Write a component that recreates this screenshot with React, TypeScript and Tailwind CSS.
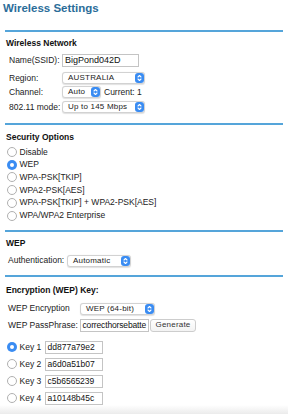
import React from "react";

// --- small form pieces ---
function Stepper() {
    return (
        <div className="w-[9px] h-full shrink-0 rounded-[3px] bg-[#3a8cf2] flex items-center justify-center">
            <svg width="5" height="8" viewBox="0 0 5 8" fill="none" stroke="white" strokeWidth="1.1" strokeLinecap="round" strokeLinejoin="round">
                <path d="M1 3 L2.5 1.5 L4 3" />
                <path d="M1 5 L2.5 6.5 L4 5" />
            </svg>
        </div>
    );
}

function Select({ value, className }: { value: string; className: string }) {
    return (
        <div className={`h-[12px] flex items-center border border-[#d2d2d2] rounded-[3px] bg-white shadow-[0_0.5px_1px_rgba(0,0,0,0.12)] ${className}`}>
            <div className="flex-1 pl-[5px] text-[8px] tracking-[0.2px] text-[#222] whitespace-nowrap overflow-hidden leading-none">{value}</div>
            <Stepper />
        </div>
    );
}

function TextBox({ value, className }: { value: string; className: string }) {
    return (
        <div className={`h-[13px] flex items-center border border-[#c4c4c4] bg-white px-[2px] text-[8.5px] text-[#111] whitespace-nowrap overflow-hidden leading-none ${className}`}>
            {value}
        </div>
    );
}

function Radio({ checked }: { checked?: boolean }) {
    if (checked) {
        return (
            <div className="w-[10px] h-[10px] shrink-0 rounded-full bg-[#3a8cf2] flex items-center justify-center">
                <div className="w-[3.5px] h-[3.5px] rounded-full bg-white" />
            </div>
        );
    }
    return <div className="w-[10px] h-[10px] shrink-0 rounded-full border border-[#b0b0b0] bg-white" />;
}

function Rule({ className }: { className: string }) {
    return <div className={`ml-[5px] w-[278px] h-[2px] bg-[#55a5da] ${className}`} />;
}

function Heading({ children, className }: { children: React.ReactNode; className: string }) {
    return <div className={`pl-[6px] h-[12px] flex items-center text-[8.5px] font-bold text-[#111] ${className}`}>{children}</div>;
}

const securityOptions = [
    { label: "Disable" },
    { label: "WEP", checked: true },
    { label: "WPA-PSK[TKIP]" },
    { label: "WPA2-PSK[AES]" },
    { label: "WPA-PSK[TKIP] + WPA2-PSK[AES]" },
    { label: "WPA/WPA2 Enterprise" },
];

const keys = [
    { n: 1, value: "dd877a79e2", checked: true },
    { n: 2, value: "a6d0a51b07" },
    { n: 3, value: "c5b6565239" },
    { n: 4, value: "a10148b45c" },
];

export default function App() {
    return (
        <div className="w-[288px] h-[414px] bg-white overflow-hidden flex flex-col font-['Liberation_Sans',Arial,sans-serif] text-[#222]">
            {/* Page title */}
            <div className="pl-[3px] mt-[2px] h-[14px] flex items-center text-[11.5px] font-bold text-[#2b6d99]">
                Wireless Settings
            </div>

            <Rule className="mt-[14px]" />

            {/* Wireless Network */}
            <Heading className="mt-[5px]">Wireless Network</Heading>
            <div className="flex flex-col pl-[9px] text-[8.5px]">
                <div className="mt-[5px] h-[13px] flex items-center">
                    <span className="w-[53px]">Name(SSID):</span>
                    <TextBox value="BigPond042D" className="w-[77px] text-[9px]" />
                </div>
                <div className="mt-[5px] h-[12px] flex items-center">
                    <span className="w-[53px]">Region:</span>
                    <Select value="AUSTRALIA" className="w-[83px]" />
                </div>
                <div className="mt-[2px] h-[12px] flex items-center">
                    <span className="w-[53px]">Channel:</span>
                    <Select value="Auto" className="w-[39px]" />
                    <span className="ml-[3px]">Current: 1</span>
                </div>
                <div className="mt-[3px] h-[12px] flex items-center">
                    <span className="w-[53px]">802.11 mode:</span>
                    <Select value="Up to 145 Mbps" className="w-[83px]" />
                </div>
            </div>

            <Rule className="mt-[10px]" />

            {/* Security Options */}
            <Heading className="mt-[7px]">Security Options</Heading>
            <div className="mt-[2px] flex flex-col pl-[7px] text-[8.5px]">
                {securityOptions.map((o) => (
                    <div key={o.label} className="h-[12.7px] flex items-center gap-[2.5px]">
                        <Radio checked={o.checked} />
                        <span>{o.label}</span>
                    </div>
                ))}
            </div>

            <Rule className="mt-[8px]" />

            {/* WEP */}
            <Heading className="mt-[6px]">WEP</Heading>
            <div className="mt-[5px] pl-[8px] h-[12px] flex items-center text-[8.5px]">
                <span className="w-[59px]">Authentication:</span>
                <Select value="Automatic" className="w-[64px]" />
            </div>

            <Rule className="mt-[8px]" />

            {/* Encryption keys */}
            <Heading className="mt-[8px]">Encryption (WEP) Key:</Heading>
            <div className="flex flex-col pl-[8px] text-[8.5px]">
                <div className="mt-[6px] h-[12px] flex items-center">
                    <span className="w-[72px]">WEP Encryption</span>
                    <Select value="WEP (64-bit)" className="w-[75px]" />
                </div>
                <div className="mt-[4px] h-[13px] flex items-center">
                    <span className="w-[72px]">WEP PassPhrase:</span>
                    <TextBox value="correcthorsebatte" className="w-[69px] !pl-[1.5px] !pr-0 tracking-[-0.15px]" />
                    <div className="ml-[1px] h-[13px] w-[46px] flex items-center justify-center rounded-[3px] border border-[#cdcdcd] bg-gradient-to-b from-white to-[#f3f3f3] text-[8px] text-[#333] tracking-[0.2px]">
                        Generate
                    </div>
                </div>
            </div>

            <div className="mt-[9px] flex flex-col gap-[4px] pl-[7px] text-[8.5px]">
                {keys.map((k) => (
                    <div key={k.n} className="h-[13px] flex items-center">
                        <Radio checked={k.checked} />
                        <span className="ml-[2.5px] w-[25px]">Key {k.n}</span>
                        <TextBox value={k.value} className="w-[58px]" />
                    </div>
                ))}
            </div>

            {/* bottom fade */}
            <div className="mt-auto h-[10px] bg-gradient-to-b from-white to-[#ebebeb]" />
        </div>
    );
}
